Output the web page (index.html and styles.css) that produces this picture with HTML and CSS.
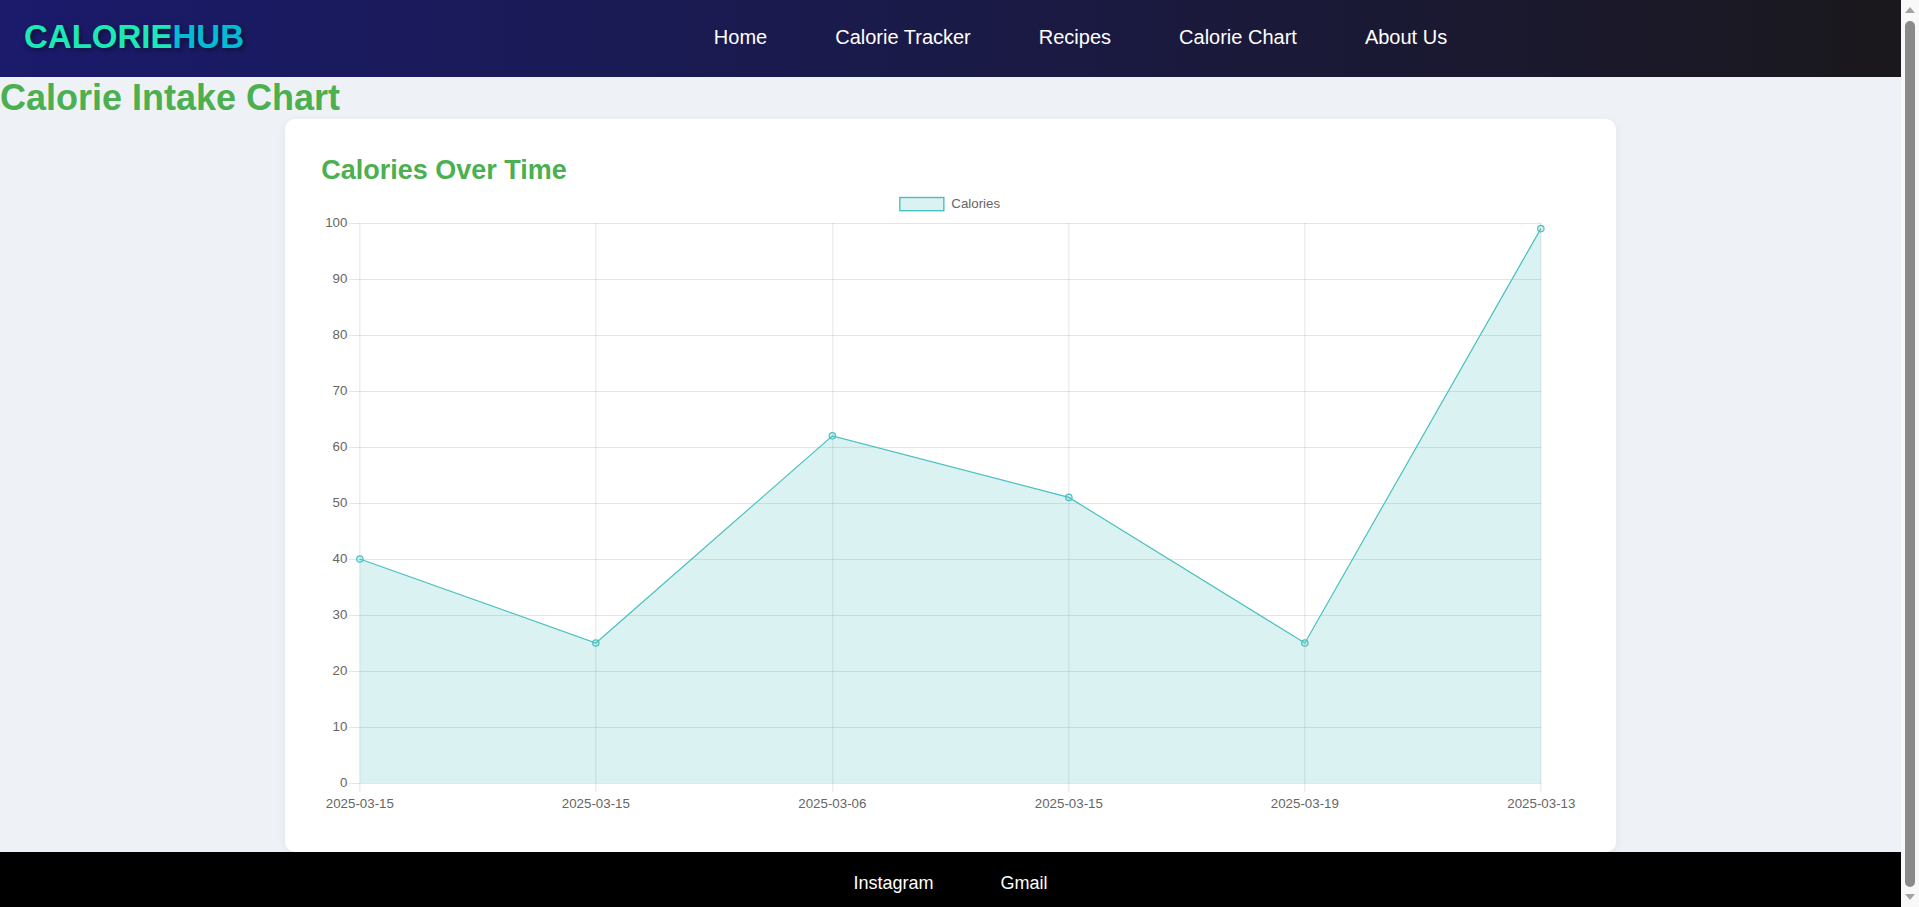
FILE: index.html
```html
<!DOCTYPE html>
<html lang="en">
<head>
<meta charset="utf-8">
<title>CalorieHub - Calorie Chart</title>
<link rel="stylesheet" href="styles.css">
</head>
<body>
<header class="site-header">
  <div class="logo"><span class="logo-a">CALORIE</span><span class="logo-b">HUB</span></div>
  <nav class="main-nav">
    <ul class="nav-list">
      <li><a href="#">Home</a></li>
      <li><a href="#">Calorie Tracker</a></li>
      <li><a href="#">Recipes</a></li>
      <li><a href="#">Calorie Chart</a></li>
      <li><a href="#">About Us</a></li>
    </ul>
  </nav>
</header>
<h1 class="page-title">Calorie Intake Chart</h1>
<section class="chart-card">
  <h2 class="chart-title">Calories Over Time</h2>
  <svg class="chart" width="1250" height="626" viewBox="0 0 1250 626" xmlns="http://www.w3.org/2000/svg">
    <g class="legend">
      <rect x="574.5" y="11.5" width="44" height="13.2" fill="rgba(75,192,192,0.2)" stroke="rgb(75,192,192)" stroke-width="1.4"/>
      <text x="626" y="18.3" class="lbl" dominant-baseline="middle">Calories</text>
    </g>
    <g class="grid" stroke="rgba(0,0,0,0.1)" stroke-width="1">
      <line x1="24" y1="37.5" x2="1216" y2="37.5"/>
      <line x1="24" y1="93.5" x2="1216" y2="93.5"/>
      <line x1="24" y1="149.5" x2="1216" y2="149.5"/>
      <line x1="24" y1="205.5" x2="1216" y2="205.5"/>
      <line x1="24" y1="261.5" x2="1216" y2="261.5"/>
      <line x1="24" y1="317.5" x2="1216" y2="317.5"/>
      <line x1="24" y1="373.5" x2="1216" y2="373.5"/>
      <line x1="24" y1="429.5" x2="1216" y2="429.5"/>
      <line x1="24" y1="485.5" x2="1216" y2="485.5"/>
      <line x1="24" y1="541.5" x2="1216" y2="541.5"/>
      <line x1="24" y1="597.5" x2="1216" y2="597.5"/>
      <line x1="34.5" y1="37" x2="34.5" y2="606"/>
      <line x1="270.5" y1="37" x2="270.5" y2="606"/>
      <line x1="507.5" y1="37" x2="507.5" y2="606"/>
      <line x1="743.5" y1="37" x2="743.5" y2="606"/>
      <line x1="979.5" y1="37" x2="979.5" y2="606"/>
      <line x1="1215.5" y1="37" x2="1215.5" y2="606"/>
    </g>
    <g class="lbl" text-anchor="end" dominant-baseline="middle">
      <text x="22" y="37">100</text>
      <text x="22" y="93">90</text>
      <text x="22" y="149">80</text>
      <text x="22" y="205">70</text>
      <text x="22" y="261">60</text>
      <text x="22" y="317">50</text>
      <text x="22" y="373">40</text>
      <text x="22" y="429">30</text>
      <text x="22" y="485">20</text>
      <text x="22" y="541">10</text>
      <text x="22" y="597">0</text>
    </g>
    <g class="lbl" text-anchor="middle">
      <text x="34.5" y="622">2025-03-15</text>
      <text x="270.5" y="622">2025-03-15</text>
      <text x="507" y="622">2025-03-06</text>
      <text x="743.5" y="622">2025-03-15</text>
      <text x="979.5" y="622">2025-03-19</text>
      <text x="1216" y="622">2025-03-13</text>
    </g>
    <polygon points="34.5,373 270.5,457 507,249.8 743.5,311.4 979.5,457 1215.5,42.6 1215.5,597 34.5,597" fill="rgba(75,192,192,0.2)"/>
    <polyline points="34.5,373 270.5,457 507,249.8 743.5,311.4 979.5,457 1215.5,42.6" fill="none" stroke="rgb(75,192,192)" stroke-width="1.2"/>
    <g fill="rgba(75,192,192,0.2)" stroke="rgb(75,192,192)" stroke-width="1.2">
      <circle cx="34.5" cy="373" r="3.2"/>
      <circle cx="270.5" cy="457" r="3.2"/>
      <circle cx="507" cy="249.8" r="3.2"/>
      <circle cx="743.5" cy="311.4" r="3.2"/>
      <circle cx="979.5" cy="457" r="3.2"/>
      <circle cx="1215.5" cy="42.6" r="3.2"/>
    </g>
  </svg>
</section>
<footer class="site-footer">
  <a href="#">Instagram</a>
  <a href="#">Gmail</a>
</footer>
<div class="scrollbar" aria-hidden="true">
  <svg class="sb-arrow" width="18" height="18" viewBox="0 0 18 18"><polygon points="4,13 14,13 9,7" fill="#a3a3a3"/></svg>
  <div class="sb-track"><div class="sb-thumb"></div></div>
  <svg class="sb-arrow" width="18" height="18" viewBox="0 0 18 18"><polygon points="4,5 14,5 9,11" fill="#a3a3a3"/></svg>
</div>
</body>
</html>
```
FILE: styles.css
```css
html, body {
  margin: 0;
  padding: 0;
}
body {
  background: #eef2f7;
  font-family: "Liberation Sans", Arial, sans-serif;
  margin-right: 18px;
}
.site-header {
  height: 77px;
  display: flex;
  align-items: center;
  padding: 0 24px;
  background: linear-gradient(90deg, #1b1a6c 0%, #1a1a48 50%, #1a181c 100%);
}
.logo {
  font-size: 33px;
  font-weight: bold;
  padding-bottom: 4px;
  text-shadow: 2px 2px 5px rgba(0, 0, 0, 0.45);
  white-space: nowrap;
}
.logo-a { color: #1de9b6; }
.logo-b { color: #00bcd4; }
.main-nav {
  flex: 1;
  padding-bottom: 2px;
}
.nav-list {
  list-style: none;
  margin: 0;
  padding: 0 0 0 40px;
  display: flex;
  justify-content: center;
  gap: 68px;
}
.nav-list a {
  color: #ffffff;
  text-decoration: none;
  font-size: 20px;
}
.page-title {
  margin: 0;
  font-size: 36px;
  font-weight: bold;
  color: #4caf50;
}
.chart-card {
  width: 70%;
  margin: 0 auto;
  box-sizing: border-box;
  background: #ffffff;
  border-radius: 10px;
  box-shadow: 0 2px 10px rgba(0, 0, 0, 0.06);
  padding: 36px 40px 40px;
}
.chart-title {
  margin: 0 0 0 -4px;
  font-size: 27px;
  font-weight: bold;
  color: #4caf50;
}
.chart {
  display: block;
  width: 100%;
  height: 626px;
}
.lbl, .lbl text {
  font-family: "Liberation Sans", Arial, sans-serif;
  font-size: 13.3px;
  fill: #666666;
}
.site-footer {
  background: #000000;
  padding: 21px 0 20px;
  display: flex;
  justify-content: center;
  gap: 67px;
}
.site-footer a {
  color: #ffffff;
  text-decoration: none;
  font-size: 18px;
}
.scrollbar {
  position: fixed;
  top: 0;
  right: 0;
  width: 18px;
  height: 100vh;
  background: #f8f8f8;
  display: flex;
  flex-direction: column;
}
.sb-arrow {
  display: block;
  flex: none;
}
.sb-track {
  flex: 1;
  display: flex;
  justify-content: center;
  padding: 3px 0 2px;
}
.sb-thumb {
  width: 10px;
  height: 100%;
  background: #8a8a8a;
  border-radius: 5px;
}
```
